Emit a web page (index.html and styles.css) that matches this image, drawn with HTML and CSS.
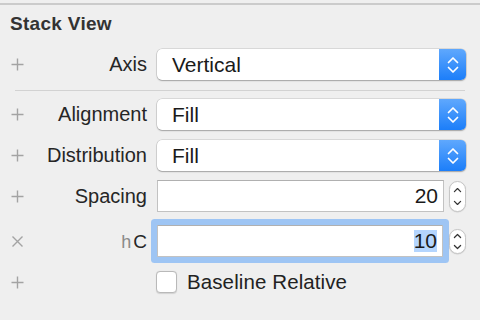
FILE: index.html
```html
<!DOCTYPE html>
<html>
<head>
<meta charset="utf-8">
<link rel="stylesheet" href="styles.css">
</head>
<body>
<div class="panel">
  <div class="title">Stack View</div>

  <div class="row row-axis">
    <span class="icon"><svg width="13" height="13" viewBox="0 0 13 13"><path d="M6.5 0.5V12.5M0.5 6.5H12.5" stroke="#a3a3a3" stroke-width="1.4"/></svg></span>
    <span class="label">Axis</span>
    <div class="popup"><span class="val">Vertical</span><span class="pbtn"><svg width="12" height="18" viewBox="0 0 12 18"><path d="M1.5 6.5L6 2L10.5 6.5M1.5 11.5L6 16L10.5 11.5" fill="none" stroke="#fff" stroke-width="1.7" stroke-linecap="round" stroke-linejoin="round"/></svg></span></div>
  </div>

  <div class="sep"></div>

  <div class="row row-align">
    <span class="icon"><svg width="13" height="13" viewBox="0 0 13 13"><path d="M6.5 0.5V12.5M0.5 6.5H12.5" stroke="#a3a3a3" stroke-width="1.4"/></svg></span>
    <span class="label">Alignment</span>
    <div class="popup"><span class="val">Fill</span><span class="pbtn"><svg width="12" height="18" viewBox="0 0 12 18"><path d="M1.5 6.5L6 2L10.5 6.5M1.5 11.5L6 16L10.5 11.5" fill="none" stroke="#fff" stroke-width="1.7" stroke-linecap="round" stroke-linejoin="round"/></svg></span></div>
  </div>

  <div class="row row-dist">
    <span class="icon"><svg width="13" height="13" viewBox="0 0 13 13"><path d="M6.5 0.5V12.5M0.5 6.5H12.5" stroke="#a3a3a3" stroke-width="1.4"/></svg></span>
    <span class="label">Distribution</span>
    <div class="popup"><span class="val">Fill</span><span class="pbtn"><svg width="12" height="18" viewBox="0 0 12 18"><path d="M1.5 6.5L6 2L10.5 6.5M1.5 11.5L6 16L10.5 11.5" fill="none" stroke="#fff" stroke-width="1.7" stroke-linecap="round" stroke-linejoin="round"/></svg></span></div>
  </div>

  <div class="row row-spacing">
    <span class="icon"><svg width="13" height="13" viewBox="0 0 13 13"><path d="M6.5 0.5V12.5M0.5 6.5H12.5" stroke="#a3a3a3" stroke-width="1.4"/></svg></span>
    <span class="label">Spacing</span>
    <div class="fieldwrap">
      <div class="field"><span class="num">20</span></div>
      <div class="stepper tall"><svg width="17" height="31" viewBox="0 0 17 31"><path d="M5 10L8.5 6.5L12 10M5 21L8.5 24.5L12 21" fill="none" stroke="#333" stroke-width="1.4" stroke-linecap="round" stroke-linejoin="round"/></svg></div>
    </div>
  </div>

  <div class="row row-hc">
    <span class="icon"><svg width="13" height="13" viewBox="0 0 13 13"><path d="M1.5 1.5L11.5 11.5M11.5 1.5L1.5 11.5" stroke="#a3a3a3" stroke-width="1.4"/></svg></span>
    <span class="label"><span class="h">h</span><span class="c">C</span></span>
    <div class="fieldwrap">
      <div class="field focus"><span class="num sel">10</span></div>
      <div class="stepper short"><svg width="17" height="25" viewBox="0 0 17 25"><path d="M5 8L8.5 4.5L12 8M5 17L8.5 20.5L12 17" fill="none" stroke="#333" stroke-width="1.4" stroke-linecap="round" stroke-linejoin="round"/></svg></div>
    </div>
  </div>

  <div class="row row-check">
    <span class="icon"><svg width="13" height="13" viewBox="0 0 13 13"><path d="M6.5 0.5V12.5M0.5 6.5H12.5" stroke="#a3a3a3" stroke-width="1.4"/></svg></span>
    <span class="label"></span>
    <label class="check"><span class="box"></span><span class="ctext">Baseline Relative</span></label>
  </div>
</div>
</body>
</html>
```
FILE: styles.css
```css
html, body {
  margin: 0;
  padding: 0;
  background: #efefef;
}
body {
  width: 480px;
  height: 320px;
  overflow: hidden;
  font-family: "Liberation Sans", Arial, sans-serif;
  color: #222;
}
.panel {
  margin-top: 3px;
  border-top: 2px solid #cbcbcb;
  display: flex;
  flex-direction: column;
}
.title {
  font-weight: bold;
  font-size: 19px;
  line-height: 20px;
  padding: 9px 0 0 10px;
  color: #333;
  letter-spacing: 0.3px;
}
.row {
  display: grid;
  grid-template-columns: 13px 133px 309px;
  column-gap: 0;
  padding-left: 11px;
  align-items: center;
  font-size: 20px;
}
.row .label {
  text-align: right;
  padding-right: 10px;
  color: #262626;
}
.row > * { grid-row: 1; }
.icon { display: flex; align-items: center; height: 13px; }
.icon svg { display: block; }
.label { grid-column: 2; }
.popup, .fieldwrap, .check { grid-column: 3; }

.row-axis { margin-top: 15px; height: 31px; }
.sep {
  height: 1px;
  background: #d2d2d2;
  margin: 10px 0 0 15px;
  width: 450px;
}
.row-align { margin-top: 8px; height: 31px; }
.row-dist { margin-top: 10px; height: 31px; }
.row-spacing { margin-top: 9px; height: 32px; }
.row-hc { margin-top: 13px; height: 32px; }
.row-check { margin-top: 13px; height: 22px; }

.popup {
  display: flex;
  height: 31px;
  background: #fff;
  border-radius: 5px;
  box-shadow: 0 0 0 0.5px rgba(0,0,0,0.18), 0 1px 1.5px rgba(0,0,0,0.25);
  overflow: hidden;
}
.popup .val {
  flex: 1;
  padding-left: 15px;
  line-height: 31px;
  color: #1a1a1a;
  font-size: 21px;
}
.pbtn {
  width: 27px;
  background: linear-gradient(#5fa8fd, #1c7ef9);
  display: flex;
  align-items: center;
  justify-content: center;
}
.pbtn svg { display: block; }

.fieldwrap {
  display: flex;
  align-items: center;
  gap: 5px;
  height: 32px;
}
.field {
  flex: 1;
  height: 32px;
  box-sizing: border-box;
  background: #fff;
  border: 1px solid #c2c2c2;
  border-top-color: #b0b0b0;
  display: flex;
  align-items: center;
  justify-content: flex-end;
  padding-right: 5px;
}
.field.focus {
  box-shadow: 0 0 0 6px #9ec5f4;
  border-radius: 1px;
}
.num {
  color: #1a1a1a;
  line-height: 22px;
  font-size: 21px;
}
.num.sel {
  background: #b4d5fe;
}
.stepper {
  width: 17px;
  box-sizing: border-box;
  background: #fff;
  border: 1px solid #c6c6c6;
  border-radius: 9px;
  box-shadow: 0 0.5px 1px rgba(0,0,0,0.15);
  display: flex;
  align-items: center;
  justify-content: center;
}
.stepper svg { display: block; }
.stepper.tall { height: 31px; }
.stepper.short { height: 25px; margin-left: 1px; }

.label .h {
  color: #8a8a8a;
  font-size: 18px;
  margin-right: 2px;
}
.label .c { color: #262626; font-size: 19px; }

.check {
  display: flex;
  align-items: center;
  gap: 10px;
}
.box {
  width: 21px;
  height: 22px;
  box-sizing: border-box;
  background: #fff;
  border: 1px solid #b9b9b9;
  border-radius: 4px;
  box-shadow: 0 0.5px 1px rgba(0,0,0,0.12);
  margin-left: -1px;
}
.ctext { color: #222; font-size: 20.5px; letter-spacing: 0.1px; }
```
